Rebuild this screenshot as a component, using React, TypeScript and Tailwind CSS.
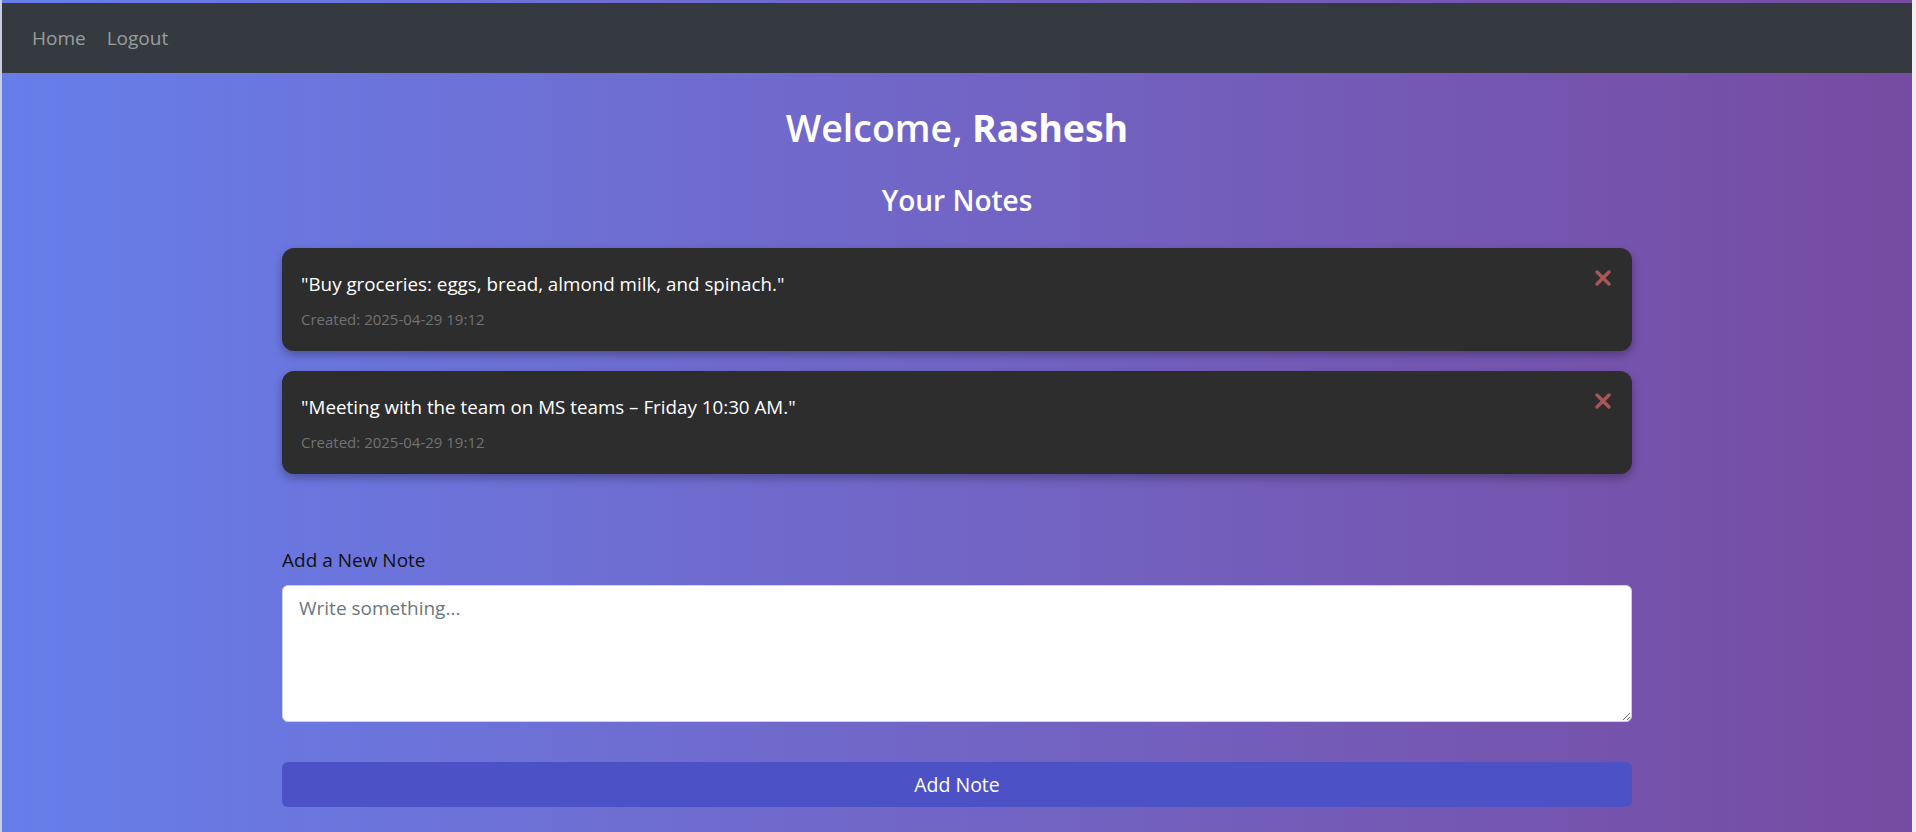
import React from "react";

const notes = [
  { text: '"Buy groceries: eggs, bread, almond milk, and spinach."', created: "2025-04-29 19:12" },
  { text: '"Meeting with the team on MS teams – Friday 10:30 AM."', created: "2025-04-29 19:12" },
];

function CloseIcon() {
  return (
    <svg width="16" height="16" viewBox="0 0 16 16" aria-hidden="true">
      <path d="M2 2 L14 14 M14 2 L2 14" stroke="#a85656" strokeWidth="3.4" strokeLinecap="round" />
    </svg>
  );
}

function NoteCard({ text, created }: { text: string; created: string }) {
  return (
    <div className="flex items-start justify-between rounded-xl bg-[#2d2d2d] pt-[21px] pb-[20px] pl-[19px] pr-[21px] shadow-[0_4px_10px_rgba(0,0,0,0.3)]">
      <div>
        <p className="text-[18.8px] leading-[30px] text-white">{text}</p>
        <p className="mt-[8px] text-[15px] leading-[24px] text-[#707274]">Created: {created}</p>
      </div>
      <button className="mt-[1px] flex h-[16px] w-[16px] items-center justify-center">
        <CloseIcon />
      </button>
    </div>
  );
}

export default function App() {
  return (
    <div className="flex min-h-screen font-['Open_Sans',sans-serif]">
      <div className="w-[2px] shrink-0 bg-[#c9cde6]"></div>

      <div className="flex-1 bg-linear-to-r from-[#667eea] to-[#764ba2] pb-[25px]">
        <nav className="mt-[3px] flex h-[70px] items-center gap-[21px] bg-[#343a40] pl-[30px]">
          <a href="#" className="text-[19px] text-white/50">Home</a>
          <a href="#" className="text-[19px] text-white/50">Logout</a>
        </nav>

        <main className="mx-auto w-[1350px]">
          <h1 className="mt-[31px] text-center text-[37.5px] leading-[48px] font-semibold text-white">
            Welcome, <strong className="font-bold">Rashesh</strong>
          </h1>
          <h2 className="mt-[31px] text-center text-[28px] leading-[34px] font-semibold text-white">Your Notes</h2>

          <div className="mt-[31px] flex flex-col gap-5">
            {notes.map((n, i) => (
              <NoteCard key={i} text={n.text} created={n.created} />
            ))}
          </div>

          <label className="mt-[71px] block text-[19px] leading-[30px] text-[#111]">Add a New Note</label>
          <textarea
            placeholder="Write something..."
            className="mt-[10px] block h-[137px] w-full rounded-md border border-[#cfd3d8] bg-white px-4 py-[7px] text-[19px] leading-[30px] text-[#212529] placeholder:text-[#6c757d] outline-none"
          ></textarea>

          <button className="mt-[40px] block h-[45px] w-full rounded-md bg-[#4c52c6] text-[19.5px] text-white">
            Add Note
          </button>
        </main>
      </div>

      <div className="w-[4px] shrink-0 bg-[#f0f0f0]"></div>
    </div>
  );
}
